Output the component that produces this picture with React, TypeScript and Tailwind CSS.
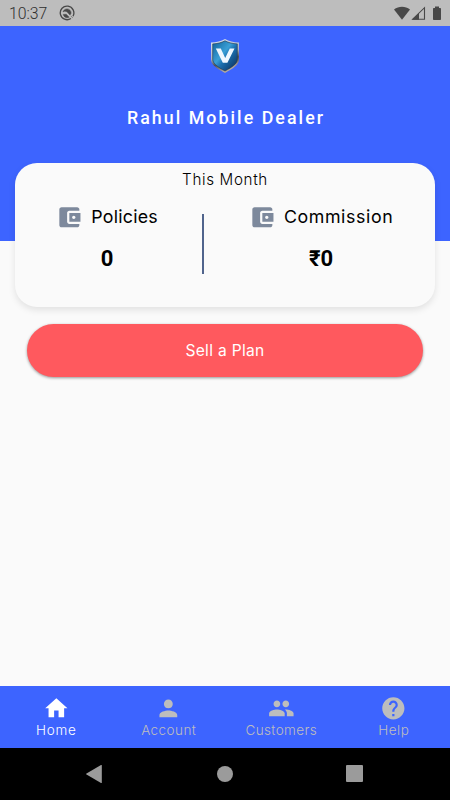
import React from "react";

const HOME = "M10 20v-6h4v6h5v-8h3L12 3 2 12h3v8z";
const PERSON =
  "M12 12c2.21 0 4-1.79 4-4s-1.79-4-4-4-4 1.79-4 4 1.79 4 4 4zm0 2c-2.67 0-8 1.34-8 4v2h16v-2c0-2.66-5.33-4-8-4z";
const PEOPLE =
  "M16 11c1.66 0 2.99-1.34 2.99-3S17.66 5 16 5c-1.66 0-3 1.34-3 3s1.34 3 3 3zm-8 0c1.66 0 2.99-1.34 2.99-3S9.66 5 8 5C6.34 5 5 6.34 5 8s1.34 3 3 3zm0 2c-2.33 0-7 1.17-7 3.5V19h14v-2.5c0-2.33-4.67-3.5-7-3.5zm8 0c-.29 0-.62.02-.97.05 1.16.84 1.97 1.97 1.97 3.45V19h6v-2.5c0-2.33-4.67-3.5-7-3.5z";
const HELP =
  "M12 2C6.48 2 2 6.48 2 12s4.48 10 10 10 10-4.48 10-10S17.52 2 12 2zm1 17h-2v-2h2v2zm2.07-7.75l-.9.92C13.45 12.9 13 13.5 13 15h-2v-.5c0-1.1.45-2.1 1.17-2.83l1.24-1.26c.37-.36.59-.86.59-1.41 0-1.1-.9-2-2-2s-2 .9-2 2H8c0-2.21 1.79-4 4-4s4 1.79 4 4c0 .88-.36 1.68-.93 2.25z";
const WALLET =
  "M21 18v1c0 1.1-.9 2-2 2H5c-1.11 0-2-.9-2-2V5c0-1.1.89-2 2-2h14c1.1 0 2 .9 2 2v1h-9c-1.11 0-2 .9-2 2v8c0 1.1.89 2 2 2h9zm-9-2h10V8H12v8zm4-2.5c-.83 0-1.5-.67-1.5-1.5s.67-1.5 1.5-1.5 1.5.67 1.5 1.5-.67 1.5-1.5 1.5z";

function Icon({ d }: { d: string }) {
  return (
    <svg viewBox="0 0 24 24" className="h-[26.7px] w-[26.7px] shrink-0 fill-current">
      <path d={d} />
    </svg>
  );
}

function StatusBar() {
  return (
    <div className="flex h-[26px] shrink-0 items-center bg-[#bdbdbd] pr-[8px] pl-[9px] text-[#484848]">
      <span className="pt-px font-[Roboto,sans-serif] text-[15.8px] leading-[26px] font-light text-[#2f2f2f]">
        10:37
      </span>
      <svg viewBox="0 0 16 16" className="ml-[12px] h-4 w-4">
        <path
          d="M11.9 13.5A6.8 6.8 0 1 1 14 11.2"
          fill="none"
          stroke="currentColor"
          strokeWidth="1.3"
        />
        <path
          d="M4 7C4.6 4.8 6.4 3.8 8.2 3.9c2.2.1 4 1.9 3.9 4.3L11 10 7.9 6.8C6.4 5.8 5 6 4 7zM4.2 9.4l3-.1 3 2.9c-2.6 1.1-5.1.1-6-2.8zM11.8 10.8l2 2.2"
          fill="currentColor"
          stroke="currentColor"
          strokeWidth=".5"
        />
      </svg>
      <svg viewBox="0 0 48 16" className="mt-px ml-auto h-4 w-[48px]">
        <path d="M0 3.5C4.7-.3 11.3-.3 16 3.5L8 13.8z" fill="currentColor" />
        <path d="M18.7 13.2H30.5V1.7z" fill="none" stroke="currentColor" strokeWidth="1.1" />
        <path d="M18 13.7 25 7v6.7z" fill="currentColor" />
        <path
          d="M41 .5h4V2h1.2q.8 0 .8.8v10.4q0 .8-.8.8h-6.4q-.8 0-.8-.8V2.8q0-.8.8-.8H41z"
          fill="currentColor"
        />
      </svg>
    </div>
  );
}

function Shield() {
  return (
    <svg viewBox="0 0 30 36" className="h-9 w-[30px]">
      <defs>
        <linearGradient id="face" x1="0" y1="0" x2="1" y2="1">
          <stop offset="0" stopColor="#0e6099" />
          <stop offset=".42" stopColor="#3a9fd6" />
          <stop offset=".56" stopColor="#1b70b0" />
          <stop offset="1" stopColor="#0a2850" />
        </linearGradient>
        <linearGradient id="rim" x1="0" y1="0" x2=".3" y2="1">
          <stop offset="0" stopColor="#dfe8f0" />
          <stop offset=".55" stopColor="#a9b5c2" />
          <stop offset=".75" stopColor="#4c5057" />
          <stop offset="1" stopColor="#b3aaa0" />
        </linearGradient>
      </defs>
      <path
        d="M15 1C11 3.3 6.5 4.3 1 4.5V21.5c0 5.4 6 9 14 13.4 8-4.4 14-8 14-13.4V4.5C23.5 4.3 19 3.3 15 1z"
        fill="url(#rim)"
      />
      <path
        d="M15 2.8C11.3 4.8 7.3 5.7 2.7 5.9V21.2c0 4.5 5.1 7.8 12.3 11.8 7.2-4 12.3-7.3 12.3-11.8V5.9C22.7 5.7 18.7 4.8 15 2.8z"
        fill="url(#face)"
        stroke="#203650"
        strokeWidth=".6"
      />
      <path d="M5.8 10.5h5L15.2 20l4.6-9.5h4.7L17.4 24.7h-4.6z" fill="#eef7ff" />
    </svg>
  );
}

type StatProps = { label: string; value: string; className: string; labelClass: string };

function Stat({ label, value, className, labelClass }: StatProps) {
  return (
    <div className={`flex flex-col items-center ${className}`}>
      <div className="flex h-[27px] items-center gap-[8.5px]">
        <span className="text-[#7d899c]">
          <Icon d={WALLET} />
        </span>
        <span className={`relative -top-px text-[17.8px] leading-[27px] whitespace-nowrap ${labelClass}`}>
          {label}
        </span>
      </div>
      <span className="mt-[14px] font-[Roboto,'Noto_Sans',sans-serif] text-[22px] leading-[28px] font-bold">
        {value}
      </span>
    </div>
  );
}

type TabProps = { label: string; d: string; active?: boolean; textClass: string };

function Tab({ label, d, active, textClass }: TabProps) {
  return (
    <div
      className={`flex flex-1 flex-col items-center pt-[9px] ${active ? "text-white" : "text-[#bdbdbd]"}`}
    >
      <Icon d={d} />
      <span className={`text-[13.5px] leading-[16px] font-light ${textClass}`}>{label}</span>
    </div>
  );
}

export default function App() {
  return (
    <div className="flex h-[800px] w-[450px] flex-col overflow-hidden bg-[#fafafa] font-[Inter,sans-serif] text-black">
      <StatusBar />
      <header className="flex h-[215px] shrink-0 flex-col items-center bg-[#3d64ff] pt-[12px]">
        <Shield />
        <h1 className="mt-[32px] pl-[2px] font-[Roboto,sans-serif] text-[17.8px] leading-[24px] font-medium tracking-[2.05px] text-white">
          Rahul Mobile Dealer
        </h1>
      </header>
      <main className="flex flex-1 flex-col">
        <section className="mx-[15px] -mt-[78.5px] h-[144.5px] shrink-0 rounded-[22px] bg-[#fafafa] shadow-[0_3px_7px_rgba(0,0,0,0.1)]">
          <h2 className="pt-[7px] text-center text-[15.2px] leading-[20px] font-light tracking-[0.65px]">
            This Month
          </h2>
          <div className="mt-[14px] flex">
            <Stat label="Policies" value="0" className="w-[187px] pr-[3px]" labelClass="tracking-[0.25px]" />
            <div className="mt-[10px] h-[60px] w-[2px] bg-[#50648c]" />
            <Stat label="Commission" value="₹0" className="flex-1 pl-[3px]" labelClass="tracking-[0.6px]" />
          </div>
        </section>
        <button className="mx-[27px] mt-[17px] h-[52.5px] rounded-full bg-[#ff595e] pt-px text-[15.6px] font-normal tracking-[0.3px] text-white shadow-[0_1px_3px_rgba(0,0,0,0.4)]">
          Sell a Plan
        </button>
      </main>
      <nav className="flex h-[61.5px] shrink-0 bg-[#3d64ff]">
        <Tab label="Home" d={HOME} active textClass="tracking-[0.75px]" />
        <Tab label="Account" d={PERSON} textClass="tracking-[0.45px]" />
        <Tab label="Customers" d={PEOPLE} textClass="tracking-[0.4px]" />
        <Tab label="Help" d={HELP} textClass="tracking-[0.5px]" />
      </nav>
      <footer className="flex h-[52.5px] shrink-0 items-center bg-black pl-[86px] text-[#9b9b9b]">
        <svg viewBox="0 0 16 18" className="h-[18px] w-4 fill-current">
          <path d="M15 0q.8-.4.8.5v17q0 .9-.8.5L.5 9.6q-.8-.6 0-1.2z" />
        </svg>
        <div className="ml-[115px] h-4 w-4 rounded-full bg-[#9b9b9b]" />
        <div className="ml-[113px] h-[17px] w-[17px] rounded-[1px] bg-[#9b9b9b]" />
      </footer>
    </div>
  );
}
